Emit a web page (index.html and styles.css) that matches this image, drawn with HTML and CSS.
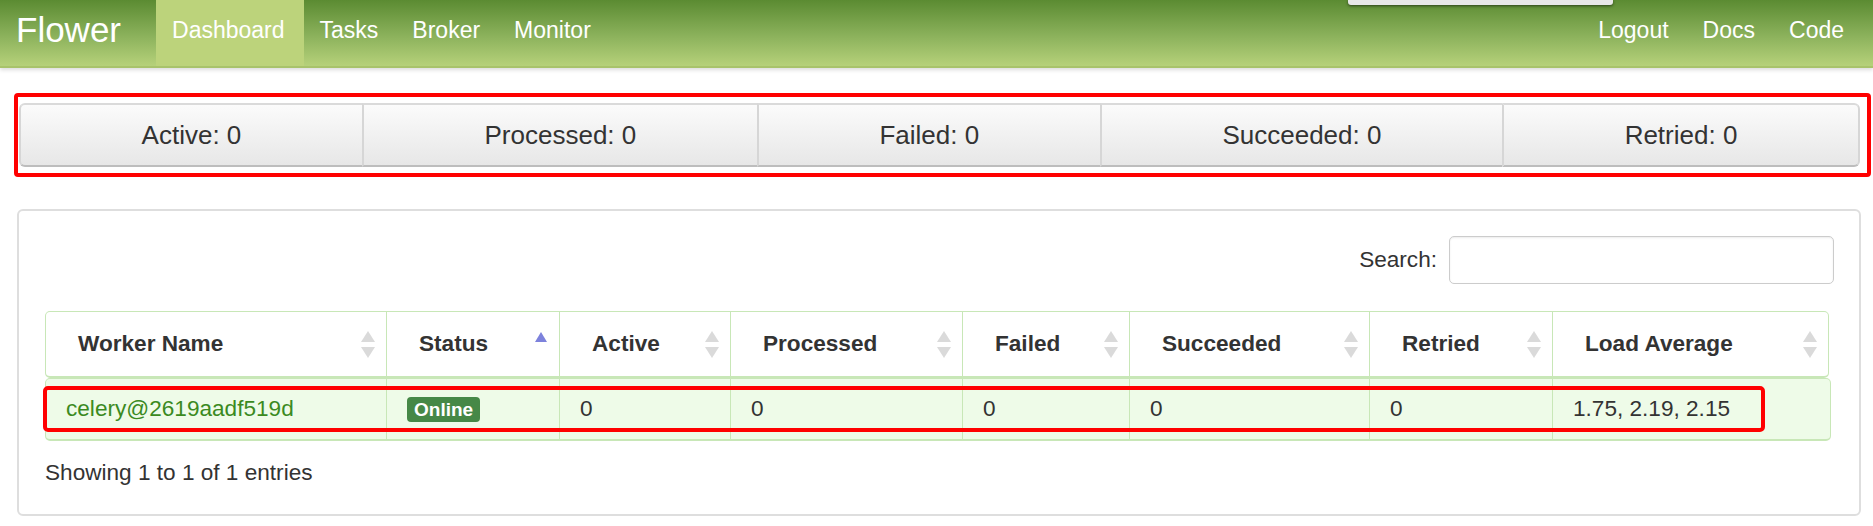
FILE: index.html
```html
<!DOCTYPE html>
<html lang="en">
<head>
<meta charset="utf-8">
<title>Flower</title>
<link rel="stylesheet" href="styles.css">
</head>
<body>
<nav class="navbar">
  <a class="brand" href="#">Flower</a>
  <ul class="nav">
    <li><a class="active" href="#">Dashboard</a></li>
    <li><a href="#">Tasks</a></li>
    <li><a href="#">Broker</a></li>
    <li><a href="#">Monitor</a></li>
  </ul>
  <ul class="nav nav-right">
    <li><a href="#">Logout</a></li>
    <li><a href="#">Docs</a></li>
    <li><a href="#">Code</a></li>
  </ul>
</nav>
<div class="popup"></div>

<main class="page">
  <div class="stats">
    <div class="stat">Active: 0</div>
    <div class="stat">Processed: 0</div>
    <div class="stat">Failed: 0</div>
    <div class="stat">Succeeded: 0</div>
    <div class="stat">Retried: 0</div>
  </div>

  <section class="panel">
    <div class="search-row">
      <label class="search-label" for="q">Search:</label>
      <input class="search-input" id="q" type="text">
    </div>

    <div class="grid grid-head">
      <div class="th"><span>Worker Name</span><svg class="sort" viewBox="0 0 14 27" width="14" height="27"><path d="M7 0L14 11H0Z" fill="#dadada"/><path d="M0 16H14L7 27Z" fill="#dadada"/></svg></div>
      <div class="th"><span>Status</span><svg class="sort" viewBox="0 0 14 27" width="14" height="27"><path d="M7 1L13 11H1Z" fill="#7d82dc"/></svg></div>
      <div class="th"><span>Active</span><svg class="sort" viewBox="0 0 14 27" width="14" height="27"><path d="M7 0L14 11H0Z" fill="#dadada"/><path d="M0 16H14L7 27Z" fill="#dadada"/></svg></div>
      <div class="th"><span>Processed</span><svg class="sort" viewBox="0 0 14 27" width="14" height="27"><path d="M7 0L14 11H0Z" fill="#dadada"/><path d="M0 16H14L7 27Z" fill="#dadada"/></svg></div>
      <div class="th"><span>Failed</span><svg class="sort" viewBox="0 0 14 27" width="14" height="27"><path d="M7 0L14 11H0Z" fill="#dadada"/><path d="M0 16H14L7 27Z" fill="#dadada"/></svg></div>
      <div class="th"><span>Succeeded</span><svg class="sort" viewBox="0 0 14 27" width="14" height="27"><path d="M7 0L14 11H0Z" fill="#dadada"/><path d="M0 16H14L7 27Z" fill="#dadada"/></svg></div>
      <div class="th"><span>Retried</span><svg class="sort" viewBox="0 0 14 27" width="14" height="27"><path d="M7 0L14 11H0Z" fill="#dadada"/><path d="M0 16H14L7 27Z" fill="#dadada"/></svg></div>
      <div class="th"><span>Load Average</span><svg class="sort" viewBox="0 0 14 27" width="14" height="27"><path d="M7 0L14 11H0Z" fill="#dadada"/><path d="M0 16H14L7 27Z" fill="#dadada"/></svg></div>
    </div>

    <div class="grid grid-body">
      <div class="td"><a class="worker" href="#">celery@2619aadf519d</a></div>
      <div class="td"><span class="badge">Online</span></div>
      <div class="td">0</div>
      <div class="td">0</div>
      <div class="td">0</div>
      <div class="td">0</div>
      <div class="td">0</div>
      <div class="td">1.75, 2.19, 2.15</div>
    </div>

    <div class="info">Showing 1 to 1 of 1 entries</div>
  </section>
</main>

<div class="mark mark-stats"></div>
<div class="mark mark-row"></div>
</body>
</html>
```

FILE: styles.css
```css
* { box-sizing: border-box; }

html, body {
  margin: 0;
  padding: 0;
  background: #fff;
}

body {
  font-family: "Liberation Sans", Arial, "Helvetica Neue", sans-serif;
  font-size: 22.6px;
  color: #333;
  position: relative;
}

/* ---------- navbar ---------- */
.navbar {
  display: flex;
  align-items: flex-start;
  height: 68px;
  padding: 0 11px 0 16px;
  background: linear-gradient(to bottom, #5b8b32 0%, #8cb25c 55%, #b6d17a 100%);
  border-bottom: 2px solid #a8c36b;
  box-shadow: 0 2px 4px rgba(0, 0, 0, 0.14);
}

.brand {
  display: block;
  font-size: 35px;
  line-height: 60px;
  color: #fff;
  text-decoration: none;
  margin-right: 35px;
}

.nav {
  display: flex;
  list-style: none;
  margin: 0;
  padding: 0;
}

.nav-right { margin-left: auto; }

.nav a {
  display: block;
  height: 66px;
  padding: 0 18px 6px 16px;
  font-size: 23px;
  line-height: 60px;
  color: #fff;
  text-decoration: none;
}

.nav a.active {
  background: #bcd37b;
  padding-right: 19px;
}

.popup {
  position: absolute;
  top: 0;
  left: 1348px;
  width: 265px;
  height: 5px;
  background: #e8e8e8;
  border-radius: 0 0 3px 3px;
  box-shadow: 0 1px 3px rgba(0, 0, 0, 0.55);
}

/* ---------- stats ---------- */
.page { display: block; }

.stats {
  display: flex;
  margin: 35px 13px 0 19px;
  height: 64px;
}

.stat {
  flex: 1 1 auto;
  display: flex;
  align-items: center;
  justify-content: center;
  font-size: 26px;
  color: #333;
  background: linear-gradient(to bottom, #fbfbfb 0%, #e7e7e7 100%);
  border-top: 2px solid #dadada;
  border-bottom: 2px solid #bdbdbd;
  border-left: 2px solid #d6d6d6;
}

.stat:first-child { border-radius: 6px 0 0 6px; }
.stat:last-child {
  border-right: 2px solid #d6d6d6;
  border-radius: 0 6px 6px 0;
}

/* ---------- panel ---------- */
.panel {
  margin: 42px 12px 0 17px;
  border: 2px solid #dedede;
  border-radius: 6px;
  padding: 25px 28px 25px 26px;
}

.search-row {
  display: flex;
  justify-content: flex-end;
  align-items: center;
  margin-right: -3px;
  height: 48px;
}

.search-label {
  margin-right: 12px;
  color: #333;
}

.search-input {
  width: 385px;
  height: 48px;
  border: 1px solid #cccccc;
  border-radius: 5px;
  box-shadow: inset 0 1px 2px rgba(0, 0, 0, 0.08);
  font: inherit;
  padding: 0 10px;
}

.grid {
  display: grid;
  grid-template-columns: 340px 173px 171px 232px 167px 240px 183px 1fr;
  border: 1px solid #c8e7b7;
  border-radius: 5px;
  overflow: hidden;
}

.grid-head {
  margin-top: 27px;
  margin-right: 2px;
  border-bottom-width: 2px;
}

.th {
  display: flex;
  align-items: center;
  justify-content: space-between;
  height: 64px;
  padding: 0 11px 0 32px;
  font-weight: bold;
  color: #333;
  border-left: 1px solid #c8e7b7;
}

.th:first-child { border-left: 0; }

.sort { display: block; flex: none; }

.grid-body {
  border-bottom-width: 2px;
  border-top-width: 1px;
  background: #eefbe8;
}

.td {
  display: flex;
  align-items: center;
  height: 60px;
  padding-left: 20px;
  border-left: 1px solid #c8e7b7;
  color: #333;
}

.td:first-child { border-left: 0; }

.worker {
  color: #3b8a1f;
  text-decoration: none;
}

.badge {
  display: inline-block;
  background: #468847;
  color: #fff;
  font-weight: bold;
  font-size: 19px;
  line-height: 25px;
  padding: 0 7px;
  border-radius: 4px;
}

.info {
  margin-top: 16px;
  line-height: 32px;
  color: #333;
}

/* ---------- annotation marks ---------- */
.mark {
  position: absolute;
  border: 4px solid #ff0000;
  border-radius: 4px;
  pointer-events: none;
}

.mark-stats {
  left: 14px;
  top: 93px;
  width: 1857px;
  height: 84px;
}

.mark-row {
  left: 43px;
  top: 386px;
  width: 1722px;
  height: 46px;
  border-radius: 5px;
}
```
